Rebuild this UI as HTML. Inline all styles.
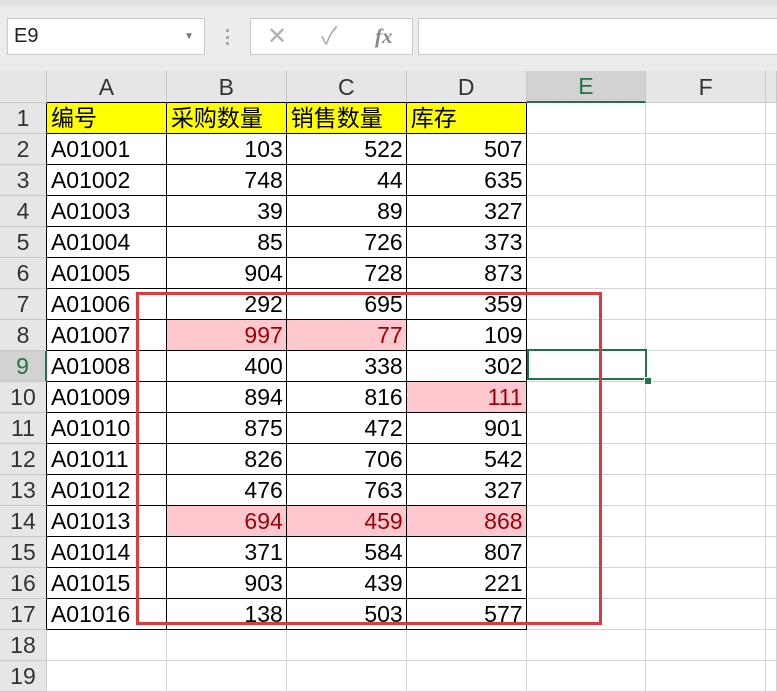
<!DOCTYPE html>
<html><head><meta charset="utf-8"><style>
body{margin:0;width:777px;height:685px;overflow:hidden;background:#fff;font-family:"Liberation Sans","Noto Sans CJK SC",sans-serif;position:relative}
.top{position:absolute;left:0;top:0;width:777px;height:71px;background:#ececec}
.strip{position:absolute;left:0;top:0;width:777px;height:6px;background:#e2e2e2}
.box{position:absolute;background:#fff;border:1px solid #c8c8c8;box-sizing:border-box}
table{position:absolute;left:0;top:71px;border-collapse:separate;border-spacing:0;table-layout:fixed}
td{padding:0;height:30px;border-right:1px solid #d4d4d4;border-bottom:1px solid #d4d4d4;font-size:23px;white-space:nowrap;overflow:hidden;line-height:30px}
td.h{background:#e6e6e6;text-align:center;color:#333;border-color:#c8c8c8}
tr.ch td{background:#e6e6e6;text-align:center;color:#333;border-color:#c8c8c8}
td.d{border-right-color:#000;border-bottom-color:#000;text-align:right;padding-right:3px}
td.t{text-align:left;padding-left:4px;padding-right:0}
td.y{background:#ffff00}
td.p{background:#ffc7ce;color:#9c0006}
td.hb{border-right-color:#000}
</style></head><body>
<div class="top"><div class="strip"></div>
<div class="box" style="left:7px;top:18px;width:198px;height:37px;font-size:20px;line-height:35px;padding-left:6px;color:#222">E9<span style="position:absolute;right:10px;top:0;font-size:10px;color:#777">▼</span></div>
<div style="position:absolute;left:226px;top:29px;width:3px;height:16px;border-left:3px dotted #aaa"></div>
<div class="box" style="left:250px;top:18px;width:163px;height:37px;color:#b0b0b0;font-size:24px;line-height:35px">
<span style="position:absolute;left:16px">✕</span><span style="position:absolute;left:70px">✓</span><span style="position:absolute;left:124px;font-family:'Liberation Serif',serif;font-style:italic;font-weight:bold;font-size:21px;color:#888">fx</span></div>
<div class="box" style="left:418px;top:18px;width:370px;height:37px"></div>
</div>
<svg style="position:absolute;left:18px;top:76px" width="26" height="22"><polygon points="24,2 24,20 4,20" fill="#b4b4b4"/></svg>
<table>
<colgroup><col style="width:47px"><col style="width:120px"><col style="width:120px"><col style="width:120px"><col style="width:120px"><col style="width:120px"><col style="width:120px"><col style="width:11px"></colgroup>
<tr class="ch"><td style="background:#e6e6e6"></td><td style="border-bottom-color:#000">A</td><td style="border-bottom-color:#000">B</td><td style="border-bottom-color:#000">C</td><td style="border-bottom-color:#000">D</td><td style="background:#d2d2d2;color:#217346;border-bottom:2px solid #217346;height:29px">E</td><td>F</td><td></td></tr>
<tr><td class="h hb">1</td><td class="d t y">编号</td><td class="d t y">采购数量</td><td class="d t y">销售数量</td><td class="d t y">库存</td><td></td><td></td><td></td></tr>
<tr><td class="h hb">2</td><td class="d t">A01001</td><td class="d">103</td><td class="d">522</td><td class="d">507</td><td></td><td></td><td></td></tr>
<tr><td class="h hb">3</td><td class="d t">A01002</td><td class="d">748</td><td class="d">44</td><td class="d">635</td><td></td><td></td><td></td></tr>
<tr><td class="h hb">4</td><td class="d t">A01003</td><td class="d">39</td><td class="d">89</td><td class="d">327</td><td></td><td></td><td></td></tr>
<tr><td class="h hb">5</td><td class="d t">A01004</td><td class="d">85</td><td class="d">726</td><td class="d">373</td><td></td><td></td><td></td></tr>
<tr><td class="h hb">6</td><td class="d t">A01005</td><td class="d">904</td><td class="d">728</td><td class="d">873</td><td></td><td></td><td></td></tr>
<tr><td class="h hb">7</td><td class="d t">A01006</td><td class="d">292</td><td class="d">695</td><td class="d">359</td><td></td><td></td><td></td></tr>
<tr><td class="h hb">8</td><td class="d t">A01007</td><td class="d p">997</td><td class="d p">77</td><td class="d">109</td><td></td><td></td><td></td></tr>
<tr><td class="h" style="background:#d2d2d2;color:#217346;border-right:2px solid #217346">9</td><td class="d t">A01008</td><td class="d">400</td><td class="d">338</td><td class="d">302</td><td></td><td></td><td></td></tr>
<tr><td class="h hb">10</td><td class="d t">A01009</td><td class="d">894</td><td class="d">816</td><td class="d p">111</td><td></td><td></td><td></td></tr>
<tr><td class="h hb">11</td><td class="d t">A01010</td><td class="d">875</td><td class="d">472</td><td class="d">901</td><td></td><td></td><td></td></tr>
<tr><td class="h hb">12</td><td class="d t">A01011</td><td class="d">826</td><td class="d">706</td><td class="d">542</td><td></td><td></td><td></td></tr>
<tr><td class="h hb">13</td><td class="d t">A01012</td><td class="d">476</td><td class="d">763</td><td class="d">327</td><td></td><td></td><td></td></tr>
<tr><td class="h hb">14</td><td class="d t">A01013</td><td class="d p">694</td><td class="d p">459</td><td class="d p">868</td><td></td><td></td><td></td></tr>
<tr><td class="h hb">15</td><td class="d t">A01014</td><td class="d">371</td><td class="d">584</td><td class="d">807</td><td></td><td></td><td></td></tr>
<tr><td class="h hb">16</td><td class="d t">A01015</td><td class="d">903</td><td class="d">439</td><td class="d">221</td><td></td><td></td><td></td></tr>
<tr><td class="h hb">17</td><td class="d t">A01016</td><td class="d">138</td><td class="d">503</td><td class="d">577</td><td></td><td></td><td></td></tr>
<tr><td class="h">18</td><td></td><td></td><td></td><td></td><td></td><td></td><td></td></tr>
<tr><td class="h">19</td><td></td><td></td><td></td><td></td><td></td><td></td><td></td></tr>
</table>
<div style="position:absolute;left:527px;top:349px;width:120px;height:31px;border:2px solid #217346;box-sizing:border-box"></div>
<div style="position:absolute;left:644px;top:377px;width:6px;height:6px;background:#217346;border:1px solid #fff"></div>
<div style="position:absolute;left:136px;top:292px;width:466px;height:333px;border:3px solid #e0393e;box-sizing:border-box"></div>
</body></html>
